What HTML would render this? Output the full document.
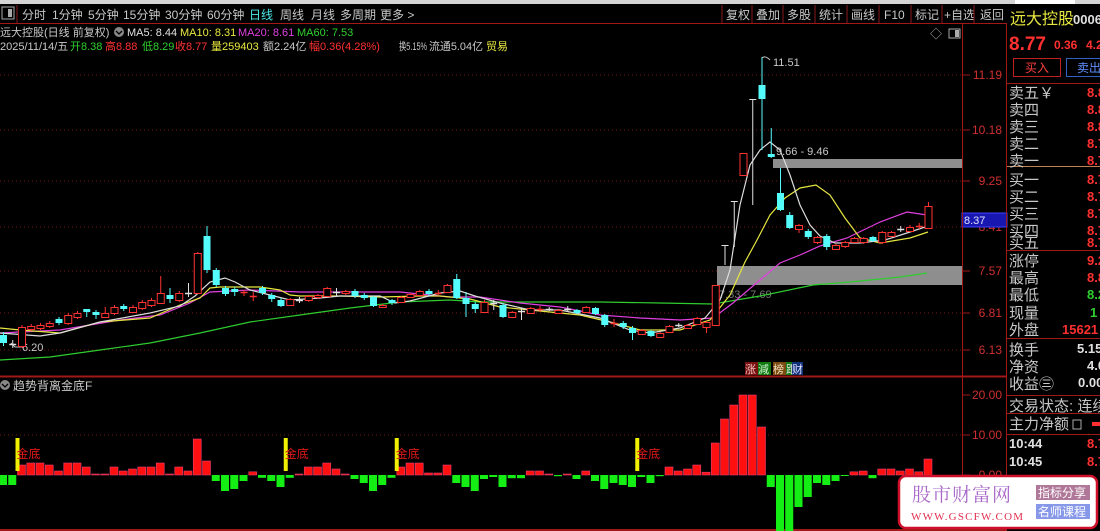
<!DOCTYPE html>
<html><head><meta charset="utf-8">
<style>
html,body{margin:0;padding:0;background:#000;width:1100px;height:531px;overflow:hidden;}
svg{display:block;font-family:"Liberation Sans","Noto Sans CJK SC",sans-serif;}
</style></head><body>
<svg id="s" width="1100" height="531" viewBox="0 0 1100 531" xmlns="http://www.w3.org/2000/svg">
<rect width="1100" height="531" fill="#000"/>
<rect x="0" y="0" width="1100" height="4" fill="#d4d4d4"/>
<rect x="1015" y="0" width="60" height="4" fill="#fff"/>
<rect x="2" y="7" width="12" height="12" fill="none" stroke="#aaa"/>
<rect x="8" y="9" width="4" height="8" fill="#aaa"/>
<line x1="17" y1="5" x2="17" y2="23" stroke="#8a1a1a"/>
<g font-size="12" fill="#c8c8c8">
<text x="22" y="19">分时</text><text x="52" y="19">1分钟</text><text x="88" y="19">5分钟</text>
<text x="123" y="19">15分钟</text><text x="165" y="19">30分钟</text><text x="207" y="19">60分钟</text>
<text x="249" y="19" fill="#4ae6e6">日线</text><text x="280" y="19">周线</text><text x="311" y="19">月线</text>
<text x="340" y="19">多周期</text><text x="380" y="19">更多 &gt;</text>
<text x="726" y="19">复权</text><text x="756" y="19">叠加</text><text x="787" y="19">多股</text>
<text x="819" y="19">统计</text><text x="851" y="19">画线</text><text x="884" y="19">F10</text>
<text x="915" y="19">标记</text><text x="944" y="19">+自选</text><text x="980" y="19">返回</text>
</g>
<g stroke="#8a1a1a"><line x1="722" y1="5" x2="722" y2="23"/><line x1="752" y1="5" x2="752" y2="23"/><line x1="783" y1="5" x2="783" y2="23"/><line x1="815" y1="5" x2="815" y2="23"/><line x1="847" y1="5" x2="847" y2="23"/><line x1="879" y1="5" x2="879" y2="23"/><line x1="911" y1="5" x2="911" y2="23"/><line x1="942" y1="5" x2="942" y2="23"/><line x1="974" y1="5" x2="974" y2="23"/></g>
<line x1="0" y1="23.5" x2="1007" y2="23.5" stroke="#a01818"/>
<g font-size="11">
<text x="0" y="36" fill="#c8c8c8">远大控股(日线 前复权)</text>
<circle cx="119" cy="32" r="5" fill="#888"/><path d="M116 31 l3 3 l3 -3" stroke="#000" fill="none" stroke-width="1.3"/>
<text x="127" y="36" fill="#e0e0e0">MA5: 8.44</text>
<text x="180" y="36" fill="#e8e840">MA10: 8.31</text>
<text x="238" y="36" fill="#e040e0">MA20: 8.61</text>
<text x="297" y="36" fill="#30d030">MA60: 7.53</text>
<text x="0" y="50" fill="#c8c8c8">2025/11/14/五</text>
<text x="70" y="50" fill="#30d030">开8.38</text>
<text x="105" y="50" fill="#ff3030">高8.88</text>
<text x="142" y="50" fill="#30d030">低8.29</text>
<text x="175" y="50" fill="#ff3030">收8.77</text>
<text x="211" y="50" fill="#e8e840">量259403</text>
<text x="263" y="50" fill="#c8c8c8">额2.24亿</text>
<text x="309" y="50" fill="#ff3030">幅0.36(4.28%)</text>
<text x="399" y="50" fill="#c8c8c8" textLength="28" lengthAdjust="spacingAndGlyphs">换5.15%</text>
<text x="429" y="50" fill="#c8c8c8" textLength="54" lengthAdjust="spacingAndGlyphs">流通5.04亿</text>
<text x="486" y="50" fill="#e8e840">贸易</text>
</g>
<text x="930" y="38" font-size="12" fill="#aaa">◇</text>
<rect x="949" y="29" width="11" height="9" fill="none" stroke="#aaa"/><rect x="955" y="30" width="4" height="7" fill="#aaa"/>
<g stroke="#7a1414" stroke-dasharray="1 3">
<line x1="0" y1="75" x2="962" y2="75"/><line x1="0" y1="130" x2="962" y2="130"/><line x1="0" y1="181" x2="962" y2="181"/><line x1="0" y1="227" x2="962" y2="227"/><line x1="0" y1="271" x2="962" y2="271"/><line x1="0" y1="313" x2="962" y2="313"/><line x1="0" y1="350" x2="962" y2="350"/>
<line x1="0" y1="435" x2="962" y2="435"/>
</g>
<g stroke="#a01818"><line x1="962" y1="75" x2="970" y2="75"/><line x1="962" y1="130" x2="970" y2="130"/><line x1="962" y1="181" x2="970" y2="181"/><line x1="962" y1="227" x2="970" y2="227"/><line x1="962" y1="271" x2="970" y2="271"/><line x1="962" y1="313" x2="970" y2="313"/><line x1="962" y1="350" x2="970" y2="350"/><line x1="962" y1="395" x2="970" y2="395"/><line x1="962" y1="435" x2="970" y2="435"/><line x1="962" y1="475" x2="970" y2="475"/></g>
<g font-size="12" fill="#d03030" text-anchor="end">
<text x="1002" y="79">11.19</text><text x="1002" y="134">10.18</text><text x="1002" y="185">9.25</text><text x="1002" y="231">8.41</text><text x="1002" y="275">7.57</text><text x="1002" y="317">6.81</text><text x="1002" y="354">6.13</text>
<text x="1002" y="399">20.00</text><text x="1002" y="439">10.00</text><text x="1002" y="479">0.00</text>
</g>
<rect x="962" y="213" width="45" height="14" fill="#1818b0" stroke="#4040ff"/>
<text x="964" y="224" font-size="11" fill="#e0e0ff">8.37</text>
<line x1="962.5" y1="24" x2="962.5" y2="531" stroke="#a01818"/>
<line x1="1006.5" y1="24" x2="1006.5" y2="531" stroke="#a01818"/>
<line x1="0" y1="376.5" x2="1007" y2="376.5" stroke="#a01818" stroke-width="2"/>
<line x1="0" y1="530" x2="1007" y2="530" stroke="#a01818" stroke-width="2"/>
<rect x="773" y="159" width="189" height="9" fill="#8e8e8e"/>
<rect x="717" y="266" width="245" height="19" fill="#8e8e8e"/>
<text x="776" y="155" font-size="11" fill="#c8c8c8">9.66 - 9.46</text>
<text x="719" y="298" font-size="11" fill="#777">7.33 - 7.69</text>
<text x="773" y="66" font-size="11" fill="#c8c8c8">11.51</text>
<path d="M762 58 q3 -3 8 2" stroke="#c8c8c8" fill="none"/>
<text x="22" y="351" font-size="11" fill="#c8c8c8">6.20</text>
<path d="M11 343 l4 4 h6" stroke="#c8c8c8" fill="none"/>
<g fill="none" stroke-width="1.2">
<polyline stroke="#2ecc2e" points="0,360 50,357 100,350 150,343 200,333 250,322 300,315 350,308 400,302 450,300 480,302 540,302 600,302 660,303 713,304 760,296 813,285 850,282 900,277 927,273"/>
<polyline stroke="#e040e0" points="0,333 60,330 120,320 160,315 190,303 210,292 250,290 300,292 340,292 400,292 450,297 480,297 520,303 560,307 600,315 640,318 680,320 713,318 733,303 760,280 780,263 800,255 820,246 847,238 880,222 907,212 927,215"/>
<polyline stroke="#e6e640" points="0,328 20,330 60,333 100,322 150,318 180,305 200,298 210,288 220,287 260,287 280,290 290,295 300,296 340,296 380,297 420,296 440,296 470,299 500,307 540,311 580,315 610,322 640,330 680,330 710,320 730,295 745,262 757,240 770,215 785,198 800,188 816,185 830,195 845,218 860,238 880,243 910,238 928,232"/>
<polyline stroke="#dcdcdc" points="0,333 40,336 60,333 100,322 150,313 180,306 195,296 210,282 225,278 235,282 250,290 270,295 290,300 320,298 340,296 380,296 395,303 410,301 440,293 460,291 475,296 500,303 530,310 560,310 600,318 630,330 650,333 680,328 705,318 720,300 730,270 740,205 750,165 760,150 770,142 780,150 790,175 800,205 810,225 820,236 835,243 860,243 885,240 910,232 928,226"/>
</g>
<g id="cd"></g>
<g font-size="11">
<rect x="745" y="362" width="13" height="13" fill="#7a1010"/><text x="745" y="373" fill="#f0c0c0">涨</text>
<rect x="758" y="362" width="13" height="13" fill="#107a10"/><text x="758" y="373" fill="#d0f0d0">減</text>
<rect x="773" y="362" width="13" height="13" fill="#7a4a10"/><text x="773" y="373" fill="#f0e0c0">榜</text>
<rect x="786" y="362" width="6" height="13" fill="#107a10"/><text x="786" y="373" fill="#e0e0e0">跟</text>
<rect x="792" y="362" width="11" height="13" fill="#10307a"/><text x="792" y="373" fill="#e0e0ff">财</text>
</g>
<circle cx="5" cy="385" r="5" fill="#888"/><path d="M2 384 l3 3 l3 -3" stroke="#000" fill="none" stroke-width="1.3"/>
<text x="13" y="390" font-size="12" fill="#c8c8c8">趋势背离金底F</text>
<g id="hs"></g>
<g font-size="16" fill="#e6e640"><text x="1010" y="24">远大控股</text></g>
<text x="1073" y="24" font-size="13" fill="#e0e0e0" font-weight="bold">0006</text>
<text x="1009" y="50" font-size="19" fill="#ff3030" font-weight="bold">8.77</text>
<text x="1054" y="49" font-size="12" fill="#ff3030" font-weight="bold">0.36</text>
<text x="1086" y="49" font-size="12" fill="#ff3030" font-weight="bold">4.2</text>
<rect x="1013.5" y="58.5" width="47" height="18" fill="none" stroke="#c02020"/>
<text x="1025" y="72" font-size="12" fill="#ff4040">买入</text>
<rect x="1066.5" y="58.5" width="40" height="18" fill="none" stroke="#3060c0"/>
<text x="1077" y="72" font-size="12" fill="#6090ff">卖出</text>
<g stroke="#a01818"><line x1="1007" y1="83.5" x2="1100" y2="83.5"/><line x1="1007" y1="250.5" x2="1100" y2="250.5"/><line x1="1007" y1="338.5" x2="1100" y2="338.5"/><line x1="1007" y1="395.5" x2="1100" y2="395.5"/><line x1="1007" y1="413.5" x2="1100" y2="413.5"/><line x1="1007" y1="434.5" x2="1100" y2="434.5"/></g>
<line x1="1007" y1="166.5" x2="1100" y2="166.5" stroke="#c08050"/>
<g font-size="15" fill="#c8c8c8">
<text x="1009" y="98">卖五￥</text><text x="1009" y="115">卖四</text><text x="1009" y="132">卖三</text><text x="1009" y="149">卖二</text><text x="1009" y="166">卖一</text>
<text x="1009" y="185">买一</text><text x="1009" y="202">买二</text><text x="1009" y="219">买三</text><text x="1009" y="236">买四</text><text x="1009" y="248">买五</text>
<text x="1009" y="266">涨停</text><text x="1009" y="283">最高</text><text x="1009" y="300">最低</text><text x="1009" y="318">现量</text><text x="1009" y="335">外盘</text>
<text x="1009" y="355">换手</text><text x="1009" y="372">净资</text><text x="1009" y="389">收益㊂</text>
<text x="1009" y="411">交易状态: 连续</text><text x="1009" y="429">主力净额</text>
</g>
<rect x="1073" y="420" width="8" height="9" fill="none" stroke="#aaa"/>
<rect x="1092" y="422" width="8" height="4" fill="#ff3030"/>
<g font-size="13" fill="#ff3030" font-weight="bold">
<text x="1087" y="97">8.8</text><text x="1087" y="114">8.8</text><text x="1087" y="131">8.8</text><text x="1087" y="148">8.7</text><text x="1087" y="165">8.7</text>
<text x="1087" y="184">8.7</text><text x="1087" y="201">8.7</text><text x="1087" y="218">8.7</text><text x="1087" y="235">8.7</text><text x="1087" y="247">8.7</text>
<text x="1087" y="265">9.2</text><text x="1087" y="282">8.8</text><text x="1087" y="299" fill="#30d030">8.2</text><text x="1090" y="317" fill="#30d030">1</text><text x="1062" y="334">15621</text>
<text x="1087" y="448">8.7</text><text x="1087" y="466">8.7</text>
</g>
<g font-size="13" fill="#e0e0e0" font-weight="bold">
<text x="1077" y="353">5.15</text><text x="1087" y="370">4.0</text><text x="1078" y="387">0.00</text>
<text x="1009" y="448">10:44</text><text x="1009" y="466">10:45</text>
</g>
<rect x="899" y="476" width="198" height="52" rx="7" fill="#fff" stroke="#d0102a" stroke-width="2.5"/>
<text x="912" y="501" font-size="19" fill="#a868c8" font-family="'Noto Serif CJK SC','Liberation Serif',serif" letter-spacing="1">股市财富网</text>
<text x="911" y="520" font-size="11" fill="#e03050" font-family="'Liberation Serif',serif" letter-spacing="1.2">WWW.GSCFW.COM</text>
<rect x="1036" y="485" width="54" height="15" fill="#b07898"/>
<text x="1038" y="497" font-size="12" fill="#fff">指标分享</text>
<rect x="1036" y="504" width="54" height="15" fill="#8898e8"/>
<text x="1038" y="516" font-size="12" fill="#fff">名师课程</text>
</svg>
<script>
var NS="http://www.w3.org/2000/svg";
function el(p,t,a){var e=document.createElementNS(NS,t);for(var k in a)e.setAttribute(k,a[k]);p.appendChild(e);return e;}
var C=[["c",335,343,332,346],["w",344,344,340,348],["r",327,346,325,348],["r",326,329,324,331],["r",325,328,323,330],["r",323,326,321,328],["c",319,323,317,325],["r",315,323,313,325],["r",313,317,311,319],["c",309,312,309,317],
["c",312,315,310,319],["r",313,317,307,318],["r",307,313,305,315],["c",306,309,304,311],["r",307,312,305,313],["r",302,308,300,310],["r",300,305,298,307],["r",293,303,276,304],["c",295,299,288,303],["r",293,300,291,302],
["w",293,293,283,297],["r",253,293,252,294],["c",236,270,226,273],["c",270,285,268,287],["c",288,294,286,296],["c",289,292,287,296],["x",292,293,290,296],["x",296,296,292,301],["c",288,293,286,295],["c",295,299,293,302],
["c",300,306,298,307],["r",299,305,298,306],["w",300,300,297,303],["r",296,300,295,302],["r",295,297,294,299],["r",288,296,287,297],["w",292,292,288,296],["r",291,293,290,295],["c",291,296,289,298],["c",295,298,293,300],
["c",297,306,296,307],["r",305,307,304,308],["c",300,303,299,305],["r",297,302,296,303],["r",294,297,293,298],["r",291,295,290,296],["c",291,294,289,296],["x",293,293,290,295],["r",285,292,284,293],["c",279,298,274,299],
["c",298,304,292,317],["c",304,309,302,313],["r",302,312,300,313],["w",303,303,300,310],["c",305,317,303,318],["r",312,317,311,318],["w",311,311,308,320],["r",308,313,307,314],["x",309,309,306,312],["w",309,309,307,311],
["r",310,313,309,314],["w",309,309,306,311],["c",310,313,309,314],["r",307,312,306,313],["c",308,314,307,315],["c",315,325,314,327],["x",323,323,319,327],["c",323,327,321,329],["c",328,333,326,340],["r",330,334,329,335],
["c",331,336,330,337],["r",333,337,332,338],["r",326,332,325,333],["w",325,325,323,327],["r",325,328,324,329],["r",318,324,317,325],["r",322,327,321,333],["r",285,325,285,326],["t",245,245,245,265],["t",201,201,201,247],
["r",153,175,153,175],["t",99,99,99,205],["c",85,99,57,150],["c",154,157,128,158],["c",193,210,168,211],["c",215,228,212,229],["r",225,229,224,233],["c",231,237,229,239],["r",237,242,236,244],["c",236,247,234,250],
["r",245,249,244,250],["r",242,246,241,248],["r",238,242,237,243],["r",238,242,237,244],["c",237,241,236,242],["r",232,242,231,244],["r",232,236,231,237],["w",229,229,226,232],["r",227,231,225,232],["x",226,226,223,229],["r",206,228,202,229]];
var g=document.getElementById("cd");
C.forEach(function(c,i){var x=3+9.25*i,t=c[0];
 var col=t=="c"?"#54fcfc":(t=="r"||t=="x")?"#ff3232":"#e0e0e0";
 if(t=="t"){el(g,"line",{x1:x+.5,y1:c[3],x2:x+.5,y2:c[4],stroke:"#e0e0e0"});el(g,"line",{x1:x-3,y1:c[3]+.5,x2:x+4,y2:c[3]+.5,stroke:"#e0e0e0"});return;}
 el(g,"line",{x1:x+.5,y1:c[3],x2:x+.5,y2:c[4],stroke:col});
 if(t=="w"||t=="x"){el(g,"line",{x1:x-3,y1:c[1]+.5,x2:x+4,y2:c[1]+.5,stroke:col,"stroke-width":1.5});return;}
 var h=Math.max(c[2]-c[1],2);
 if(t=="c")el(g,"rect",{x:x-3,y:c[1],width:7,height:h,fill:col});
 else el(g,"rect",{x:x-3,y:c[1]+.5,width:7,height:h,fill:"#000",stroke:col});
});
var H=[-2.5,-2.5,2.5,3,3,2.5,1,3,3,2,0.2,0.2,2,1,1.5,2,2,3,0.2,2,1,9,3.5,-1.5,-4,-3.5,-1.5,0.8,-0.7,-1.5,-3,-0.7,0.2,2,2,3,1.5,0.2,-1,-2,-4,-2.5,-0.7,2,3,3,0.5,0.5,2.5,-2,-3,-4,-1,-0.5,-3,
-0.8,-0.8,1,1,0,-0.3,0.2,-1,1,-1.5,-3.5,-2,-2.5,-3,-0.5,-2,-0.3,2,1,1.5,2.5,0.7,8,14,17.5,20,20,12,-3,-17.5,-20,-8,-5.5,-2,-2.5,-1.5,-0.2,0.8,1,-0.8,1.5,1.5,1,1.5,0.8,4];
var hg=document.getElementById("hs");
H.forEach(function(v,i){var x=3+9.25*i;var h=Math.abs(v)*4;if(h<1)h=1;
 if(v>=0)el(hg,"rect",{x:x-4,y:475-h,width:8,height:h,fill:"#ff1010",stroke:"#e04070","stroke-width":.6});
 else el(hg,"rect",{x:x-4,y:475,width:8,height:h,fill:"#14ee14"});
});
[2,31,43,69].forEach(function(i){var x=3+9.25*i;
 el(hg,"rect",{x:x-6,y:438,width:4,height:33,fill:"#f0f000"});
 var t=el(hg,"text",{x:x-5,y:458,"font-size":12,fill:"#e01818"});t.textContent="金底";});
</script>
</body></html>
